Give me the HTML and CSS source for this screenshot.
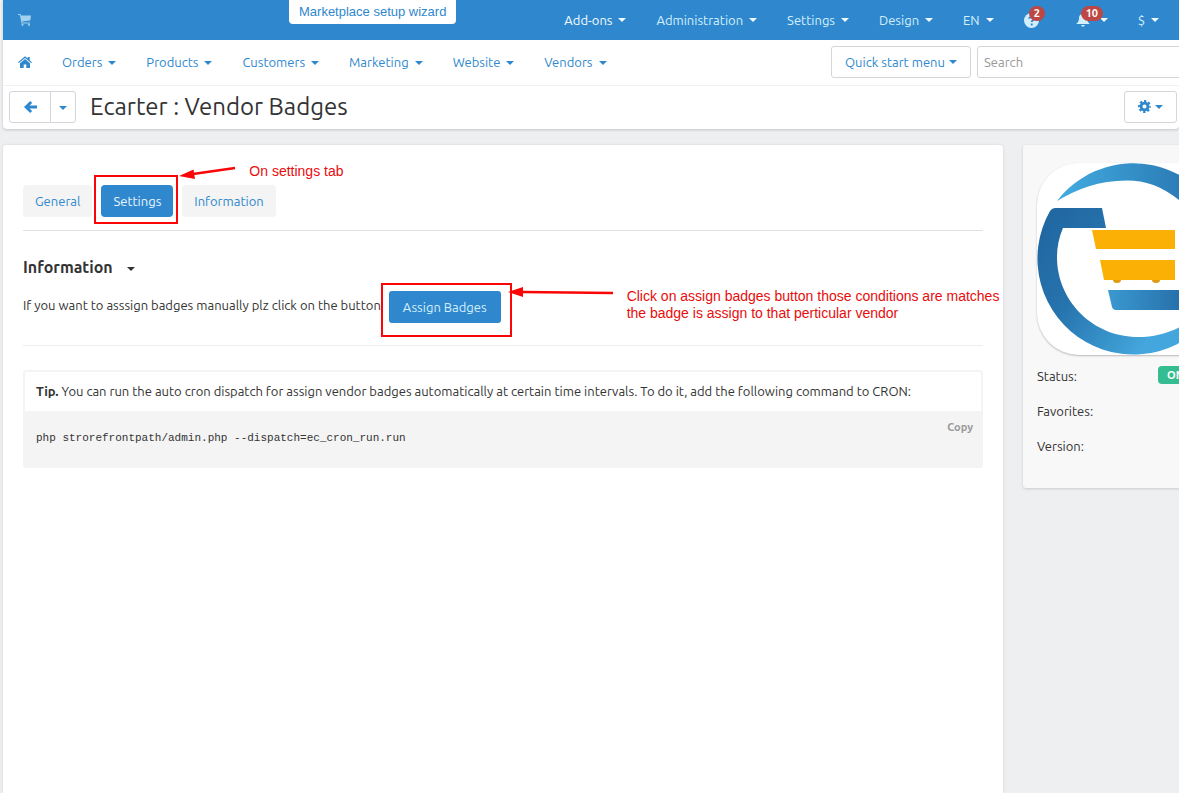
FILE: index.html
```html
<!DOCTYPE html>
<html lang="en">
  <head>
    <meta charset="UTF-8" />
    <meta name="viewport" content="width=device-width, initial-scale=1.0" />
    <title>Ecarter : Vendor Badges</title>
    <link rel="stylesheet" href="styles.css">
  </head>
  <body>
    <div class="page">
      <header class="header">
        <div class="topbar">
          <a href="#" class="cart" aria-label="Storefront">
            <svg width="13" height="12" viewBox="0 0 13 12" fill="currentColor">
              <path d="M0 0h2.6l.4 1.4H13L12.3 6.5 4.2 7.5l.2 1H12v1H3.5L1.9 1H0z" />
              <circle cx="4.5" cy="10.8" r="1.1" />
              <circle cx="11" cy="10.8" r="1.1" />
            </svg>
          </a>
          <a href="#" class="wizard">Marketplace setup wizard</a>
          <nav class="top-nav">
            <a href="#" class="active">Add-ons<span class="caret"></span></a>
            <a href="#">Administration<span class="caret"></span></a>
            <a href="#">Settings<span class="caret"></span></a>
            <a href="#">Design<span class="caret"></span></a>
            <a href="#">EN<span class="caret"></span></a>
            <a href="#" class="has-count help" aria-label="Help">
              <svg width="15" height="15" viewBox="0 0 14 14">
                <circle cx="7" cy="7" r="7" fill="currentColor" />
                <path d="M4.8 5.2C5 3.4 9.3 3.3 9.3 5.4 9.3 6.8 7.2 6.8 7.2 8.4M7.2 9.8v1.8" fill="none" stroke="#2f88cd" stroke-width="1.8" />
              </svg>
              <span class="count">2</span>
            </a>
            <a href="#" class="has-count bell" aria-label="Notifications">
              <svg width="14" height="14" viewBox="0 0 14 14" fill="currentColor">
                <path d="M7 0c.7 0 1 .5 1 1 2 .5 3 2 3 4 0 3 1 4.500 2.800 6H.2C2 9.500 3 8 3 5c0-2 1-3.500 3-4 0-.5.3-1 1-1zM5.300 12h3.400c0 2.300-3.400 2.300-3.400 0z" />
              </svg>
              <span class="count">10</span>
              <span class="caret"></span>
            </a>
            <a href="#">$<span class="caret"></span></a>
          </nav>
        </div>
        <div class="menubar">
          <nav class="main-nav">
            <a href="#" class="home" aria-label="Home">
              <svg width="14" height="12" viewBox="0 0 14 12" fill="currentColor">
                <path d="M7 .2l2.700 2.300V1h2v3.200L14 6.200l-.8.9L7 2 .8 7.100 0 6.200z" />
                <path d="M7 3l5 4.200V12H8.300V8.400H5.700V12H2V7.200z" />
              </svg>
            </a>
            <a href="#">Orders<span class="caret"></span></a>
            <a href="#">Products<span class="caret"></span></a>
            <a href="#">Customers<span class="caret"></span></a>
            <a href="#">Marketing<span class="caret"></span></a>
            <a href="#">Website<span class="caret"></span></a>
            <a href="#">Vendors<span class="caret"></span></a>
          </nav>
          <button type="button" class="btn quick">Quick start menu<span class="caret"></span></button>
          <input type="text" class="search" placeholder="Search" aria-label="Search" />
        </div>
        <div class="titlebar">
          <div class="btn-group">
            <button type="button" class="btn back" aria-label="Back">
              <svg width="13" height="12" viewBox="0 0 13 12" fill="none" stroke="currentColor" stroke-width="2.800">
                <path d="M7.200 1L2 6l5.200 5M2.500 6H13" />
              </svg>
            </button>
            <button type="button" class="btn back-menu" aria-label="Recent pages"><span class="caret"></span></button>
          </div>
          <h1>Ecarter : Vendor Badges</h1>
          <button type="button" class="btn gear" aria-label="Tools">
            <svg width="13" height="13" viewBox="0 0 12 12" fill="none" stroke="currentColor">
              <circle cx="6" cy="6" r="3.200" stroke-width="2.600" />
              <circle cx="6" cy="6" r="5.100" stroke-width="1.800" stroke-dasharray="2.200 1.805" stroke-dashoffset="1.100" />
            </svg>
            <span class="caret"></span>
          </button>
        </div>
      </header>

      <div class="content">
        <main class="card">
          <ul class="tabs">
            <li><a href="#">General</a></li>
            <li class="marked">
              <a href="#" class="active">Settings</a>
              <span class="frame tab-frame"></span>
              <svg class="arrow tab-arrow" width="57" height="16" viewBox="0 0 57 16">
                <path d="M56 3L14 9" stroke="#fb0606" stroke-width="2.400" />
                <path d="M0 11L14.500 4.500 16 14z" fill="#fb0606" />
              </svg>
              <span class="note tab-note">On settings tab</span>
            </li>
            <li><a href="#">Information</a></li>
          </ul>

          <h2>Information<span class="caret"></span></h2>
          <div class="assign">
            <span>If you want to asssign badges manually plz click on the button</span>
            <div class="marked">
              <button type="button" class="btn-primary">Assign Badges</button>
              <span class="frame btn-frame"></span>
              <svg class="arrow btn-arrow" width="106" height="12" viewBox="0 0 106 12">
                <path d="M105 7L14 6" stroke="#fb0606" stroke-width="2.400" />
                <path d="M0 6L15 1v10z" fill="#fb0606" />
              </svg>
              <span class="note btn-note">Click on assign badges button those conditions are matches<br />the badge is assign to that perticular vendor</span>
            </div>
          </div>

          <div class="tip">
            <p><b>Tip.</b> You can run the auto cron dispatch for assign vendor badges automatically at certain time intervals. To do it, add the following command to CRON:</p>
            <div class="code">
              <code>php strorefrontpath/admin.php --dispatch=ec_cron_run.run</code>
              <button type="button" class="copy">Copy</button>
            </div>
          </div>
        </main>

        <aside class="sidebar">
          <svg class="logo" width="192" height="192" viewBox="0 0 192 192">
            <defs>
              <linearGradient id="ring-top" x1="0" y1="0" x2="1" y2="0">
                <stop offset="0" stop-color="#43ace0" />
                <stop offset="0.800" stop-color="#2a7ab5" />
              </linearGradient>
              <linearGradient id="ring" x1="0" y1="0" x2="1" y2="0.600">
                <stop offset="0" stop-color="#2065a0" />
                <stop offset="0.400" stop-color="#2673ad" />
                <stop offset="0.850" stop-color="#43a6dc" />
              </linearGradient>
              <linearGradient id="base" x1="0" y1="0" x2="1" y2="0">
                <stop offset="0" stop-color="#3b99d0" />
                <stop offset="1" stop-color="#2267a2" />
              </linearGradient>
            </defs>
            <path fill="url(#ring-top)" d="M20 38A96 96 0 0 1 182 53L165 62C142 30 116 17.500 90 17.500 62 17.500 40 26 20 38z" />
            <path fill="url(#ring)" d="M18 45H65L69 65H26C22 74 20 84 20 94 20 138 56 174 101 174 128 174 150 163 170 145L180 143A96 96 0 0 1 13 48Q15 45 18 45z" />
            <path fill="#fab005" d="M55 67h83v19H59zM63 97h75v20H67z" />
            <path fill="#e09a12" d="M76 117h8a4 3 0 0 1-8 0zM115 117h8a4 3 0 0 1-8 0z" />
            <path fill="url(#base)" d="M71 127H160V147H79Q76 147 75 144z" />
          </svg>
          <dl class="facts">
            <div><dt>Status:</dt><dd><span class="label">ON</span></dd></div>
            <div><dt>Favorites:</dt><dd></dd></div>
            <div><dt>Version:</dt><dd></dd></div>
          </dl>
        </aside>
      </div>
    </div>
  </body>
</html>
```
FILE: styles.css
```css
* {
  box-sizing: border-box;
}

body {
  margin: 0;
  background: #edeff1;
  color: #333;
  font-family: Ubuntu, "Noto Sans", sans-serif;
  font-size: 13px;
  line-height: 20px;
  overflow: hidden;
}

a {
  color: #2f88cd;
  text-decoration: none;
}

button,
input {
  font: inherit;
  cursor: pointer;
}

h1,
h2,
p,
ul,
dl,
dd {
  margin: 0;
  padding: 0;
}

.page {
  display: flex;
  flex-direction: column;
  min-height: 100vh;
  padding-left: 3px;
  overflow: hidden;
}

.caret {
  display: inline-block;
  border: 4px solid transparent;
  border-top-color: currentColor;
  border-bottom: 0;
  margin-left: 6px;
  vertical-align: 2px;
}

/* header */
.header {
  background: #fff;
  box-shadow: 0 1px 3px rgba(0, 0, 0, 0.18);
  border-radius: 0 0 4px 4px;
}

.topbar {
  display: flex;
  height: 40px;
  padding: 0 5px 0 15px;
  background: #2f88cd;
}

.topbar a {
  color: #d3effc;
}

.topbar .active,
.topbar .caret {
  color: #f4fbff;
}

.topbar .caret {
  vertical-align: 3px;
}

.cart {
  padding-top: 11px;
  width: 16px;
  opacity: 0.7;
}

.topbar .wizard {
  height: 24px;
  margin-left: 255px;
  padding: 2px 10px;
  background: #fff;
  border-radius: 0 0 4px 4px;
  color: #2f88cd;
  font-family: "Liberation Sans", Arial, sans-serif;
  white-space: nowrap;
}

.top-nav {
  display: flex;
  align-items: center;
  margin-left: auto;
  white-space: nowrap;
}

.top-nav a {
  padding: 0 15px;
}

.top-nav .has-count {
  display: flex;
  align-items: center;
  position: relative;
  height: 40px;
}

.top-nav .help {
  width: 52px;
}

.top-nav .bell {
  width: 62px;
}

.bell .caret {
  margin-left: 10px;
}

.count {
  position: absolute;
  top: 6px;
  left: 20px;
  padding: 0 5px;
  background: #bd4744;
  border-radius: 8px;
  color: #fff;
  font-size: 11px;
  font-weight: bold;
  line-height: 15px;
}

.menubar {
  display: flex;
  align-items: center;
  height: 46px;
  padding-bottom: 1px;
  border-bottom: 1px solid #f0f1f2;
  overflow: hidden;
}

.main-nav {
  display: flex;
  gap: 30px;
  flex: 1;
  padding-left: 15px;
  white-space: nowrap;
}

.home svg {
  display: block;
  margin-top: 4px;
}

.btn {
  height: 32px;
  padding: 0 13px;
  background: #fff;
  border: 1px solid #d3d7db;
  border-radius: 3px;
  color: #2f88cd;
  white-space: nowrap;
}

.quick {
  width: 140px;
  padding: 0;
}

.quick .caret {
  margin-left: 4px;
  vertical-align: 3px;
}

.search {
  width: 222px;
  height: 32px;
  margin: 0 -20px 0 6px;
  padding: 0 6px;
  border: 1px solid #d3d7db;
  border-radius: 3px;
  cursor: text;
}

.search::placeholder {
  color: #999;
}

.titlebar {
  display: flex;
  align-items: center;
  height: 43px;
  padding: 0 2px 2px 6px;
}

.btn-group {
  display: flex;
}

.back {
  width: 42px;
  border-radius: 3px 0 0 3px;
}

.back svg {
  display: block;
  margin: auto;
}

.back-menu {
  width: 26px;
  margin-left: -1px;
  padding: 0;
  border-radius: 0 3px 3px 0;
}

.back-menu .caret {
  margin: 0;
}

h1 {
  flex: 1;
  padding-left: 14px;
  font-size: 24px;
  font-weight: normal;
  line-height: 30px;
}

.gear {
  display: flex;
  align-items: center;
  width: 53px;
}

.gear svg {
  flex: none;
}

.gear .caret {
  margin-left: 4px;
}

/* the sidebar runs past the right edge of the window */
.content {
  display: flex;
  flex: 1;
  gap: 20px;
  margin: 16px -70px 0 0;
}

.card {
  flex: 1;
  padding: 40px 20px;
  background: #fff;
  border-radius: 3px 3px 0 0;
  box-shadow: 0 0 3px rgba(0, 0, 0, 0.12);
}

.tabs {
  display: flex;
  gap: 9px;
  padding-bottom: 13px;
  border-bottom: 1px solid #dce1e6;
  list-style: none;
}

.tabs a {
  display: block;
  padding: 6px 12px;
  background: #f4f4f4;
  border-radius: 4px;
}

.tabs .active {
  background: #2f88cd;
  color: #e8f6fd;
}

h2 {
  margin-top: 26px;
  font-size: 16px;
  line-height: 20px;
}

h2 .caret {
  margin-left: 14px;
}

.assign {
  display: flex;
  align-items: flex-start;
  gap: 8px;
  height: 55px;
  margin-top: 14px;
  border-bottom: 1px solid #eee;
  white-space: nowrap;
}

.assign > span {
  padding-top: 4px;
}

.btn-primary {
  display: block;
  height: 32px;
  padding: 0 14px;
  background: #2f88cd;
  border: 0;
  border-radius: 3px;
  color: #d3effc;
}

/* red hints over the controls */
.marked {
  position: relative;
}

.frame {
  position: absolute;
  z-index: 1;
  border: 2px solid #fb0606;
  pointer-events: none;
}

.tab-frame {
  inset: -10px -5px -7px -7px;
}

.btn-frame {
  inset: -8px -11px -14px -8px;
}

.arrow {
  position: absolute;
  left: 100%;
  z-index: 1;
}

.tab-arrow {
  top: -20px;
  margin-left: 6px;
}

.btn-arrow {
  top: -5px;
  margin-left: 7px;
}

.note {
  position: absolute;
  left: 100%;
  z-index: 1;
  color: #e80c0c;
  font-family: "Liberation Sans", Arial, sans-serif;
  font-size: 14px;
  line-height: 17px;
  white-space: nowrap;
}

.tab-note {
  top: -22px;
  margin-left: 76px;
}

.btn-note {
  top: -3px;
  margin-left: 126px;
}

.tip {
  margin-top: 24px;
  border: 2px solid #f4f4f4;
  border-radius: 3px;
}

.tip p {
  padding: 9px 11px 10px;
}

.code {
  display: flex;
  justify-content: space-between;
  align-items: flex-start;
  height: 55px;
  padding: 6px 8px 0 11px;
  background: #f4f4f4;
}

.code code {
  padding-top: 11px;
  font-family: "Liberation Mono", monospace;
  font-size: 11px;
}

.copy {
  padding: 0;
  background: none;
  border: 0;
  color: #999;
  font-size: 11px;
  font-weight: bold;
}

.sidebar {
  align-self: flex-start;
  width: 226px;
  padding: 18px 14px 32px;
  background: #f8f8f8;
  border-radius: 3px;
  box-shadow: 0 1px 3px rgba(0, 0, 0, 0.15);
}

.logo {
  display: block;
  background: #fff;
  border-radius: 42px;
  box-shadow: 0 1px 2px rgba(0, 0, 0, 0.25);
}

.facts {
  display: flex;
  flex-direction: column;
  gap: 15px;
  margin-top: 11px;
}

.facts div {
  display: flex;
}

.facts dt {
  width: 121px;
}

.label {
  display: block;
  padding: 0 9px;
  background: #35bc90;
  border-radius: 4px;
  color: #fff;
  font-size: 11px;
  font-weight: bold;
  line-height: 18px;
}
```
